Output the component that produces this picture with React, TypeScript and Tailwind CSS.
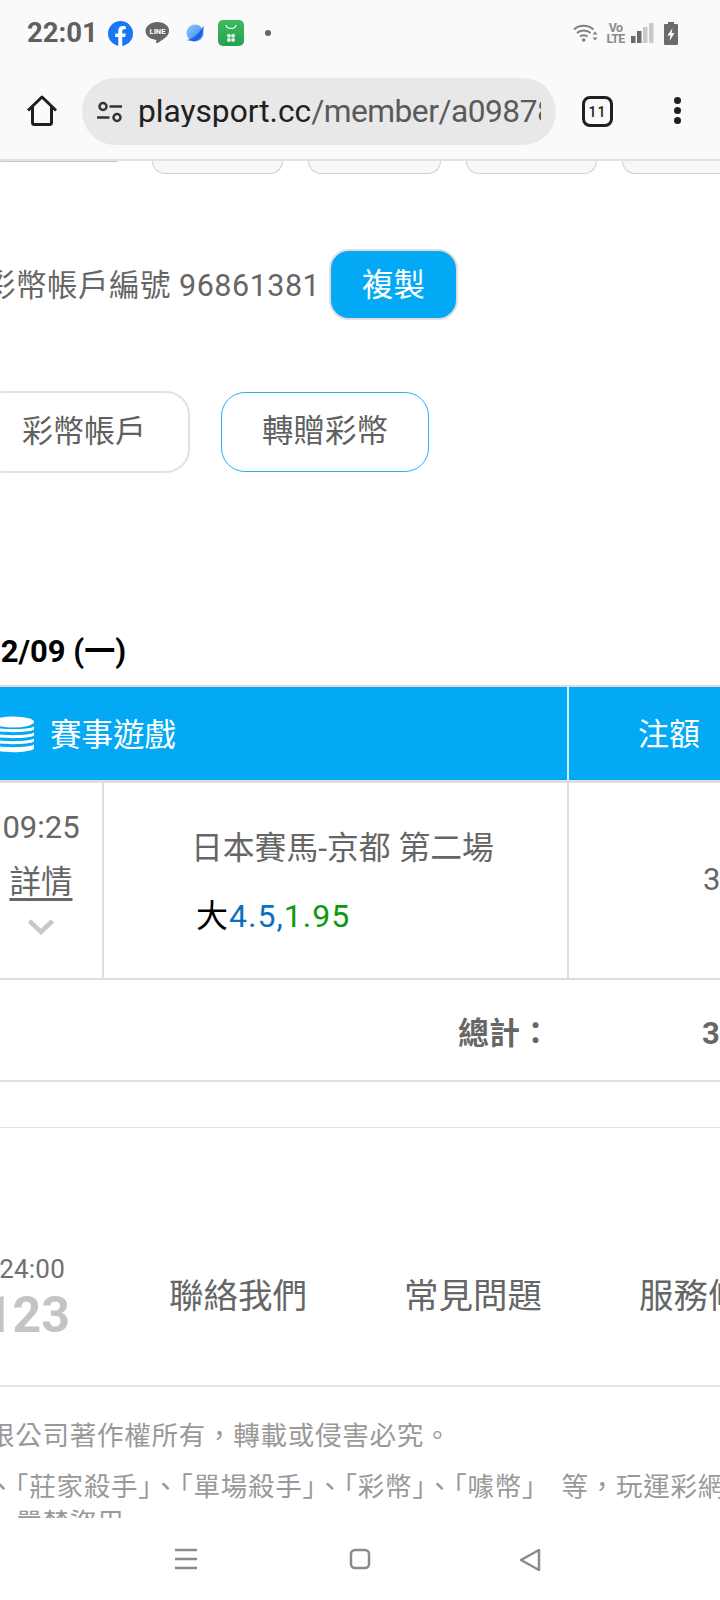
const BASE_FONT = "font-['Roboto','Noto_Sans_CJK_TC',sans-serif]"

const FacebookIcon = () => (
  <svg width="25" height="25" viewBox="0 0 25 25">
    <circle cx="12.5" cy="12.5" r="12.5" fill="#1877f2" />
    <path d="M17.2 16l.6-3.5h-3.6v-2.3c0-1 .5-1.9 2-1.9h1.6v-3s-1.4-.3-2.8-.3c-2.9 0-4.7 1.7-4.7 4.8v2.7H7.2V16h3.1v9h3.9v-9z" fill="#fff" />
  </svg>
)

const LineIcon = () => (
  <svg width="25" height="24" viewBox="0 0 25 24">
    <path d="M12.5 1C5.9 1 .5 5 .5 10c0 4.4 4.1 8 9.8 8.8.4.1.9.3 1 .6.1.3 0 1.6-.1 2-.1.8.5 1.1 1.2.7 1.5-.8 5.5-3.1 8-5.5 2-1.8 3.6-3.9 3.6-6.6C24.5 5 19.1 1 12.5 1z" fill="#666" />
    <text x="12.5" y="12.8" textAnchor="middle" fontSize="7.5" fontWeight="700" fill="#fff" fontFamily="Roboto">LINE</text>
  </svg>
)

const PlanetIcon = () => (
  <svg width="20" height="20" viewBox="0 0 20 20">
    <defs>
      <linearGradient id="planet" x1="0" y1="0" x2="1" y2="1">
        <stop offset="0" stopColor="#8fd0ff" />
        <stop offset="1" stopColor="#2a7bf5" />
      </linearGradient>
    </defs>
    <circle cx="10" cy="10" r="8.5" fill="url(#planet)" />
    <path d="M1 17C7 17 15 10 18.5 2.5 19.5 8 16 17 9 18.5z" fill="#0f4fe0" opacity="0.75" />
  </svg>
)

const StoreIcon = () => (
  <svg width="26" height="26" viewBox="0 0 26 26">
    <defs>
      <linearGradient id="store" x1="0" y1="0" x2="0" y2="1">
        <stop offset="0" stopColor="#3dbb60" />
        <stop offset="1" stopColor="#27a04c" />
      </linearGradient>
    </defs>
    <rect width="26" height="26" rx="5" fill="url(#store)" />
    <path d="M8 5c.8 4.500 9.200 4.500 10 0" fill="none" stroke="#fff" strokeWidth="1.2" />
    <circle cx="10.9" cy="15.8" r="2" fill="#d7f2de" />
    <circle cx="15.1" cy="15.8" r="2" fill="#d7f2de" />
    <circle cx="10.9" cy="20" r="2" fill="#d7f2de" />
    <circle cx="15.1" cy="20" r="2" fill="#d7f2de" />
  </svg>
)

const WifiIcon = () => (
  <svg width="26" height="20" viewBox="0 0 26 20" fill="none" stroke="#808080" strokeWidth="2">
    <path d="M1 6.5C6 1.5 15 1.5 20.5 6.5" />
    <path d="M4 10c3.5-3.2 10-3.2 13.5 0" />
    <path d="M7 13.500c2-1.800 5.500-1.800 7.500 0" />
    <circle cx="10.7" cy="17" r="1.8" fill="#808080" stroke="none" />
    <path d="M22 8.500l2.500 3h-5zM22 17.500l2.500-3h-5z" fill="#808080" stroke="none" />
  </svg>
)

const SignalIcon = () => (
  <svg width="23" height="20" viewBox="0 0 23 20">
    <rect x="0" y="13" width="4.5" height="7" fill="#6b6b6b" />
    <rect x="6" y="8" width="4.5" height="12" fill="#6b6b6b" />
    <rect x="12" y="4" width="4.5" height="16" fill="#c9c9c9" />
    <rect x="18" y="0" width="4.5" height="20" fill="#c9c9c9" />
  </svg>
)

const BatteryIcon = () => (
  <svg width="14" height="23" viewBox="0 0 14 23">
    <path d="M4 0h6v2h3a1 1 0 0 1 1 1v19a1 1 0 0 1-1 1H1a1 1 0 0 1-1-1V3a1 1 0 0 1 1-1h3z" fill="#6b6b6b" />
    <path d="M8.500 6L3.500 13.500h3L5.500 19l5-8h-3z" fill="#fff" />
  </svg>
)

const HomeIcon = () => (
  <svg width="32" height="32" viewBox="0 0 32 32" fill="none" stroke="#1f1f1f" strokeWidth="3" strokeLinejoin="round">
    <path d="M2 15.5L16 2l14 13.5M6.500 12v15.500a2 2 0 0 0 2 2h15a2 2 0 0 0 2-2V12" />
  </svg>
)

const TuneIcon = () => (
  <svg width="26" height="22" viewBox="0 0 26 22" fill="none" stroke="#333" strokeWidth="2.5">
    <circle cx="6" cy="5.5" r="3.5" />
    <path d="M12.500 5.500H25M0 16.500h12.500" />
    <circle cx="20" cy="16.5" r="3.5" />
  </svg>
)

const CoinsIcon = () => (
  <svg width="44" height="40" viewBox="0 0 44 40" className="-ml-[9px] shrink-0">
    <ellipse cx="22" cy="6" rx="21" ry="5.5" fill="#fff" />
    <path d="M1 10.500c4 3.500 38 3.500 42 0v3c-4 3.500-38 3.500-42 0zM1 16.500c4 3.500 38 3.500 42 0v3c-4 3.500-38 3.500-42 0zM1 22.500c4 3.500 38 3.500 42 0v3c-4 3.500-38 3.500-42 0zM1 28.500c4 3.500 38 3.500 42 0v4c-4 5-38 5-42 0z" fill="#fff" />
  </svg>
)

const TopTab = ({ className }: { className: string }) => (
  <div className={`h-[13px] shrink-0 rounded-b-[16px] border-x border-b border-t-0 border-[#cfcfcf] bg-[#f7f7f7] ${className}`} />
)

export default function App() {
  return (
    <div className={`flex h-[1600px] w-[720px] flex-col overflow-hidden bg-white ${BASE_FONT}`}>
      <header className="h-[161px] shrink-0 border-b-2 border-[#e2e2e2] bg-[#fafafa]">
        <div className="flex h-[66px] items-center pl-[27px]">
          <span className="w-[81px] text-[27.5px] leading-none font-bold text-[#5f5f5f]">22:01</span>
          <FacebookIcon />
          <span className="ml-[12px]"><LineIcon /></span>
          <span className="ml-[15px]"><PlanetIcon /></span>
          <span className="ml-[13px]"><StoreIcon /></span>
          <span className="ml-[21px] h-[6px] w-[6px] rounded-full bg-[#666]" />
          <span className="ml-[302px]"><WifiIcon /></span>
          <span className="ml-[7px] flex w-[19px] flex-col items-center text-[12.5px] leading-[11px] font-bold tracking-[-0.8px] whitespace-nowrap text-[#8a8a8a]">
            <span>Vo</span>
            <span>LTE</span>
          </span>
          <span className="ml-[6px]"><SignalIcon /></span>
          <span className="ml-[10px]"><BatteryIcon /></span>
        </div>
        <div className="flex h-[93px] items-start pt-[12px]">
          <span className="mt-[17px] ml-[26px]"><HomeIcon /></span>
          <div className="ml-[24px] flex h-[67px] w-[474px] items-center rounded-full bg-[#e8e8e8] pl-[15px]">
            <TuneIcon />
            <div className="ml-[15px] w-[403px] overflow-hidden text-[31.7px] leading-none whitespace-nowrap text-[#202020]">
              playsport.cc<span className="tracking-[-0.5px] text-[#5a5a5a]">/member/a09878</span>
            </div>
          </div>
          <div className="mt-[18px] ml-[26px] flex h-[31px] w-[31px] items-center justify-center rounded-[8px] border-[3.5px] border-[#1f1f1f] text-[14px] leading-none font-medium tracking-[1px] text-[#222]">
            11
          </div>
          <div className="mt-[19px] ml-[61px] flex flex-col gap-[3px]">
            <span className="h-[7px] w-[7px] rounded-full bg-[#1f1f1f]" />
            <span className="h-[7px] w-[7px] rounded-full bg-[#1f1f1f]" />
            <span className="h-[7px] w-[7px] rounded-full bg-[#1f1f1f]" />
          </div>
        </div>
      </header>

      <main className="h-[1357px] shrink-0 overflow-hidden">
        <div className="flex">
          <div className="h-[1px] w-[118px] shrink-0 rounded-b-full bg-[#c4c4c4]" />
          <TopTab className="ml-[34px] w-[131px]" />
          <TopTab className="ml-[25px] w-[133px]" />
          <TopTab className="ml-[25px] w-[131px]" />
          <TopTab className="ml-[25px] w-[130px]" />
        </div>

        <div className="mt-[75px] flex h-[71px] items-center">
          <span className="-ml-[15px] w-[344px] shrink-0 pt-[3px] text-[30.5px] leading-none tracking-[0.5px] whitespace-nowrap text-[#666]">
            彩幣帳戶編號 96861381
          </span>
          <button className="flex h-[71px] w-[129px] shrink-0 items-center justify-center rounded-[20px] border-2 border-[#dedede] bg-[#04a9f5] pt-[3px] text-[31.5px] text-white">
            複製
          </button>
        </div>

        <div className="mt-[71px] flex h-[82px] items-center">
          <div className="-ml-[20px] flex h-[82px] w-[210px] shrink-0 items-center justify-end rounded-[24px] border-2 border-[#e2e2e2] pr-[42px] text-[31px] text-[#606060]">
            彩幣帳戶
          </div>
          <div className="ml-[31px] flex h-[80px] w-[208px] shrink-0 items-center justify-center rounded-[24px] border border-[#29b0f2] text-[31.5px] text-[#606060]">
            轉贈彩幣
          </div>
        </div>

        <div className="mt-[159px] -ml-[17px] h-[40px] text-[31px] leading-[40px] font-bold text-black">12/09 (一)</div>

        <div className="mt-[13px] h-[2px] bg-[#dedede]" />
        <div className="flex h-[93px] bg-[#04a9f5] text-[31px] text-white">
          <div className="flex w-[104px] shrink-0 items-center pt-[4px]">
            <CoinsIcon />
            <span className="ml-[15px] text-[31.5px] whitespace-nowrap">賽事遊戲</span>
          </div>
          <div className="w-[465px] shrink-0 border-r-2 border-[#cdeefd]" />
          <div className="flex items-center pt-[4px] pl-[69px]">注額</div>
        </div>
        <div className="h-[3px] bg-[#dedede]" />
        <div className="flex h-[197px] border-b-2 border-[#dedede] text-[#666]">
          <div className="flex w-[104px] shrink-0 flex-col items-center border-r-2 border-[#dedede] pr-[20px]">
            <span className="mt-[26px] text-[31px] leading-[38px]">09:25</span>
            <span className="mt-[17px] text-[31.5px] leading-[38px] underline underline-offset-[5px]">詳情</span>
            <svg width="26" height="16" viewBox="0 0 26 16" className="mt-[17px]" fill="none" stroke="#c8c8c8" strokeWidth="4.5">
              <path d="M1.500 2L13 13 24.500 2" />
            </svg>
          </div>
          <div className="w-[465px] shrink-0 border-r-2 border-[#dedede] pl-[87px]">
            <div className="mt-[46px] text-[31.8px] leading-[38px] whitespace-nowrap">日本賽馬-京都 第二場</div>
            <div className="mt-[30px] pl-[5px] text-[32px] leading-[38px] tracking-[1px] whitespace-nowrap">
              <span className="text-black">大</span>
              <span className="text-[#0a70c2]">4.5,</span>
              <span className="text-[#0a9a0a]">1.95</span>
            </div>
          </div>
          <div className="flex items-center pl-[134px] text-[31px]">3</div>
        </div>
        <div className="flex h-[102px] items-center border-b-2 border-[#e2e2e2] pt-[8px] text-[31px] font-bold text-[#666]">
          <span className="ml-[458px] w-[244px] shrink-0">總計：</span>
          <span>3</span>
        </div>
        <div className="mt-[45px] h-[1px] bg-[#e2e2e2]" />

        <div className="mt-[125px] flex h-[132px] items-start overflow-hidden">
          <div className="flex w-[70px] shrink-0 flex-col items-end whitespace-nowrap">
            <span className="mr-[5px] text-[26px] leading-[32px] tracking-[0.2px] text-[#707070]">24:00</span>
            <span className="mt-[2px] text-[50px] leading-[56px] font-bold text-[#c4c4c4]">123</span>
          </div>
          <nav className="mt-[23px] ml-[99px] flex shrink-0 gap-[97px] text-[34.5px] leading-[40px] whitespace-nowrap text-[#666]">
            <span>聯絡我們</span>
            <span>常見問題</span>
            <span>服務條款</span>
          </nav>
        </div>
        <div className="h-[2px] bg-[#e5e5e5]" />
        <div className="mt-[31px] text-[26.5px] tracking-[0.75px] whitespace-nowrap text-[#999]">
          <p className="-ml-[12px] leading-[36px]">限公司著作權所有，轉載或侵害必究。</p>
          <p className="-ml-[12px] mt-[15px] leading-[36px]">
            、「莊家殺手」、「單場殺手」、「彩幣」、「噱幣」 <span className="ml-[5px]">等，玩運彩網站</span>
          </p>
          <p className="-ml-[12px] leading-[36px]">，嚴禁盜用。</p>
        </div>
      </main>

      <footer className="flex h-[82px] shrink-0 items-start bg-white pt-[30px]">
        <svg width="22" height="22" viewBox="0 0 22 22" className="ml-[175px]" stroke="#8a8a8a" strokeWidth="2.5">
          <path d="M0 2h22M0 11h22M0 20h22" />
        </svg>
        <svg width="22" height="22" viewBox="0 0 22 22" className="ml-[152px]" fill="none" stroke="#8a8a8a" strokeWidth="2.5">
          <rect x="2" y="2" width="18" height="18" rx="4" />
        </svg>
        <svg width="22" height="24" viewBox="0 0 22 24" className="ml-[148px]" fill="none" stroke="#8a8a8a" strokeWidth="2.5" strokeLinejoin="round">
          <path d="M2 12L20 2v20z" />
        </svg>
      </footer>
    </div>
  )
}
